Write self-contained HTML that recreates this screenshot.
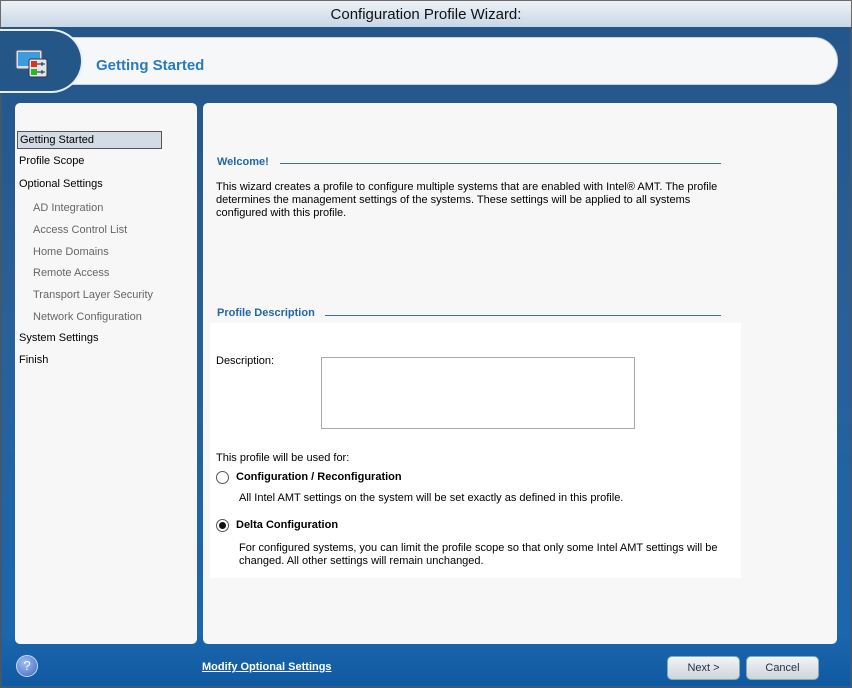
<!DOCTYPE html>
<html><head><style>
*{margin:0;padding:0;box-sizing:border-box}
body{width:852px;height:688px;overflow:hidden;font-family:"Liberation Sans","DejaVu Sans",sans-serif;font-size:11px;color:#000;background:#2a5d90;position:relative}
.tb{position:absolute;left:0;top:0;width:852px;height:27px;background:linear-gradient(#eef2f7,#c8d6e5);border:1px solid #6a6a6a;border-bottom:none;text-align:center;font-size:15px;line-height:27px;color:#111}
.bg{position:absolute;left:1px;top:27px;width:850px;height:660px;background:linear-gradient(#23568a 0%,#2a5f95 40%,#1c66ad 92%,#0f5aa2 100%);border:1px solid #555;border-top:none}
.pill{position:absolute;left:40px;top:37px;width:798px;height:48px;background:#f6f7f8;border-radius:0 24px 24px 0;border:1px solid #c6d2de}
.circ{position:absolute;left:-40px;top:29px;width:123px;height:64px;background:#245687;border:2px solid #e8eef4;border-left:none;border-radius:0 34px 34px 0}
.hdr{position:absolute;left:96px;top:57px;font-size:15px;font-weight:bold;color:#2a7bbd}
.pl{position:absolute;background:#f7f7f7;border-radius:5px}
.nav div{position:absolute;left:19px;font-size:11px}
.sub{color:#666}
.sec{position:absolute;font-weight:bold;color:#2367a8;font-size:11px}
.line{position:absolute;height:1px;background:#3c6e9e}
.btn{position:absolute;top:656px;width:73px;height:24px;border-radius:5px;background:linear-gradient(#f2f4f6,#cdd5dc);border:1px solid #8aa;text-align:center;line-height:22px;font-size:11px;color:#234}
</style></head><body>
<div class="tb">Configuration Profile Wizard:</div>
<div class="bg"></div>
<div class="pill"></div>
<div class="circ"></div>
<svg style="position:absolute;left:15px;top:49px" width="34" height="30"><rect x="1" y="1" width="26" height="19" rx="2" fill="#d8e0ea" stroke="#556"/><rect x="3" y="3" width="22" height="14" fill="#3d9be0"/><rect x="14" y="10" width="18" height="18" rx="2" fill="#dfe6ee" stroke="#334"/><rect x="16" y="12" width="6" height="6" fill="#d32"/><rect x="16" y="20" width="6" height="6" fill="#2b2"/><path d="M22 15h8M22 23h8M27 13v4M27 21v4" stroke="#222"/></svg>
<div class="hdr">Getting Started</div>
<div class="pl" style="left:15px;top:103px;width:182px;height:541px"></div>
<div class="pl" style="left:203px;top:103px;width:634px;height:541px"></div>
<div class="nav">
<div style="left:17px;top:131px;width:145px;height:18px;background:#d3dbe5;border:1px solid #555;padding:2px 0 0 2px">Getting Started</div>
<div style="top:155px">Profile Scope</div>
<div style="top:178px">Optional Settings</div>
<div class="sub" style="left:33px;top:202px">AD Integration</div>
<div class="sub" style="left:33px;top:224px">Access Control List</div>
<div class="sub" style="left:33px;top:246px">Home Domains</div>
<div class="sub" style="left:33px;top:267px">Remote Access</div>
<div class="sub" style="left:33px;top:289px">Transport Layer Security</div>
<div class="sub" style="left:33px;top:311px">Network Configuration</div>
<div style="top:332px">System Settings</div>
<div style="top:354px">Finish</div>
</div>
<div class="sec" style="left:217px;top:156px">Welcome!</div>
<div class="line" style="left:280px;top:163px;width:441px"></div>
<div style="position:absolute;left:216px;top:181px;width:505px;line-height:13px">This wizard creates a profile to configure multiple systems that are enabled with Intel® AMT. The profile determines the management settings of the systems. These settings will be applied to all systems configured with this profile.</div>
<div class="sec" style="left:217px;top:307px">Profile Description</div>
<div class="line" style="left:325px;top:315px;width:396px"></div>
<div style="position:absolute;left:210px;top:323px;width:531px;height:255px;background:#fff"></div>
<div style="position:absolute;left:216px;top:355px">Description:</div>
<div style="position:absolute;left:321px;top:357px;width:314px;height:72px;border:1px solid #aaa;background:#fff"></div>
<div style="position:absolute;left:216px;top:452px">This profile will be used for:</div>
<div style="position:absolute;left:216px;top:471px;width:13px;height:13px;border:1px solid #555;border-radius:50%;background:#fff"></div>
<div style="position:absolute;left:236px;top:471px;font-weight:bold">Configuration / Reconfiguration</div>
<div style="position:absolute;left:239px;top:492px">All Intel AMT settings on the system will be set exactly as defined in this profile.</div>
<div style="position:absolute;left:216px;top:519px;width:13px;height:13px;border:1px solid #555;border-radius:50%;background:#fff"><div style="margin:2px;width:7px;height:7px;border-radius:50%;background:#111"></div></div>
<div style="position:absolute;left:236px;top:519px;font-weight:bold">Delta Configuration</div>
<div style="position:absolute;left:239px;top:542px;width:480px;line-height:13px">For configured systems, you can limit the profile scope so that only some Intel AMT settings will be changed. All other settings will remain unchanged.</div>
<div style="position:absolute;left:16px;top:655px;width:22px;height:22px;border-radius:50%;background:radial-gradient(circle at 40% 35%,#9fc0f0,#3d67c4);border:1px solid #c8d6ee;color:#fff;text-align:center;line-height:20px;font-size:13px">?</div>
<div style="position:absolute;left:202px;top:661px;color:#fff;font-weight:bold;text-decoration:underline">Modify Optional Settings</div>
<div class="btn" style="left:667px">Next &gt;</div>
<div class="btn" style="left:746px">Cancel</div>
</body></html>
